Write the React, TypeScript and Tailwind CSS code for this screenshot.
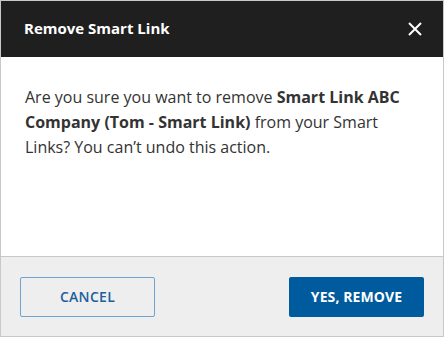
import React from "react";

export default function App() {
  return (
    <div
      className="w-[444px] h-[337px] border border-[#c8c8c8] bg-white flex flex-col"
      style={{ fontFamily: '"Open Sans", sans-serif' }}
    >
      <div className="h-[56px] bg-[#1f1f1f] flex items-center justify-between pl-[23px] pr-[21px] shrink-0">
        <span className="text-white font-bold text-[15px] -mt-[1px]">Remove Smart Link</span>
        <svg width="14" height="14" viewBox="0 0 14 14" className="text-white">
          <path d="M1 1L13 13M13 1L1 13" stroke="currentColor" strokeWidth="2" />
        </svg>
      </div>
      <div className="flex-1 px-[24px] pt-[28px] text-[16px] leading-[25px] text-[#333333]">
        Are you sure you want to remove <b>Smart Link ABC Company (Tom - Smart Link)</b> from your Smart Links? You can’t undo this action.
      </div>
      <div className="h-[80px] shrink-0 border-t border-[#c8c8c8] bg-[#eeeeee] flex items-center justify-between px-[19px]">
        <button className="w-[135px] h-[40px] border border-[#6fa3d2] rounded-[2px] text-[#1d5f9c] font-semibold text-[14px] tracking-[0.3px] bg-transparent">
          CANCEL
        </button>
        <button className="w-[135px] h-[40px] bg-[#005a9e] rounded-[2px] text-white font-bold text-[14px] tracking-[0.1px]">
          YES, REMOVE
        </button>
      </div>
    </div>
  );
}
